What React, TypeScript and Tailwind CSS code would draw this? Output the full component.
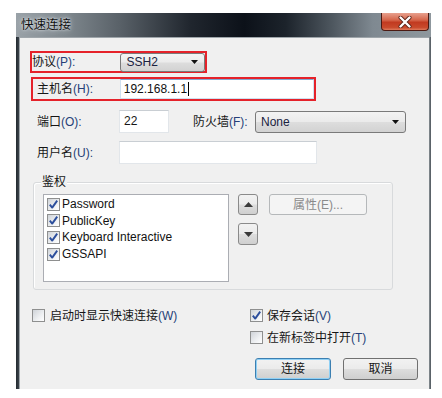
import React from 'react';

const font = "font-[family-name:'Liberation_Sans','Noto_Sans_CJK_SC',sans-serif]";

const Key: React.FC<{ k: string; tail?: string }> = ({ k, tail = '' }) => (
    <span className="text-[#263f78]">({k}){tail}</span>
);

const CheckBox: React.FC<{ checked?: boolean }> = ({ checked }) => (
    <div className="w-[13px] h-[13px] shrink-0 border border-[#8e8f8f] bg-[linear-gradient(135deg,#cfd3d8_0%,#eef0f2_60%,#ffffff_100%)] flex items-center justify-center">
        {checked && (
            <svg width="11" height="11" viewBox="0 0 11 11">
                <path d="M1.8 5.6 L4.2 8.6 L9.2 1.6" stroke="#2c4e9c" strokeWidth="1.9" fill="none" strokeLinejoin="round" />
            </svg>
        )}
    </div>
);

const Arrow: React.FC<{ up?: boolean }> = ({ up }) => (
    <svg width="9" height="5" viewBox="0 0 9 5">
        <path d={up ? 'M0 5 L4.5 0 L9 5 Z' : 'M0 0 L9 0 L4.5 5 Z'} fill="#3a3a3a" />
    </svg>
);

const Combo: React.FC<{ value: string; className: string }> = ({ value, className }) => (
    <div className={`${className} flex items-center justify-between pl-[5px] pr-[6px] border border-[#7a7a7a] rounded-[3px] bg-[linear-gradient(180deg,#f3f3f3_0%,#ebebeb_48%,#dddddd_52%,#d2d2d2_100%)] text-[12px] text-[#1a2240]`}>
        <span>{value}</span>
        <svg width="7" height="4" viewBox="0 0 7 4">
            <path d="M0 0 L7 0 L3.5 4 Z" fill="#111" />
        </svg>
    </div>
);

const winBtn =
    'flex items-center justify-center rounded-[3px] border bg-[linear-gradient(180deg,#f2f2f2_0%,#ebebeb_48%,#dddddd_52%,#cfcfcf_100%)] text-[12px]';

const App: React.FC = () => {
    return (
        <div className={`w-[442px] h-[398px] bg-white pt-[13px] pl-[16px] ${font}`}>
            <div className="w-[415px] h-[376px] flex flex-col">
                {/* title bar */}
                <div className="h-[24px] flex items-start bg-[linear-gradient(90deg,#9aa2a8_0%,#7f888e_12%,#596168_25%,#20262e_42%,#0c1119_55%,#1c232b_65%,#4d565e_76%,#7f8991_86%,#8e979d_100%)]">
                    <span className="pl-[5px] pt-[4px] text-[12.5px] leading-[16px] text-[#121212] [text-shadow:0_0_5px_#dfe5ea,0_0_2px_#e6ebee]">快速连接</span>
                    <div className="ml-auto mr-[2px] w-[48px] h-[18px] rounded-b-[4px] border border-t-0 border-[#4b1a12] bg-[linear-gradient(180deg,#e7a08e_0%,#d5654a_42%,#c13a20_55%,#c94a2c_85%,#de7a5c_100%)] flex items-center justify-center">
                        <svg width="14" height="12" viewBox="0 0 14 12">
                            <path d="M2.5 1.5 L11.5 10.5 M11.5 1.5 L2.5 10.5" stroke="#5a2218" strokeWidth="4" strokeLinecap="round" />
                            <path d="M2.5 1.5 L11.5 10.5 M11.5 1.5 L2.5 10.5" stroke="#ffffff" strokeWidth="2.4" strokeLinecap="round" />
                        </svg>
                    </div>
                </div>

                <div className="flex flex-1">
                    <div className="w-[3px] bg-[linear-gradient(90deg,#222a30,#3c444b)]" />
                    <div className="w-[410px] h-[352px] border-l border-t border-[#9ea5aa] bg-[#f0f0f0] text-[12px] text-[#161616]">
                        {/* protocol */}
                        <div className="ml-[10px] mt-[13px] w-[177px] h-[22px] border-2 border-[#e5222a] flex items-center">
                            <span className="w-[89px]">协议<Key k="P" tail=":" /></span>
                            <Combo value="SSH2" className="w-[85px] h-[19px]" />
                        </div>

                        {/* host */}
                        <div className="ml-[11px] mt-[4px] w-[285px] h-[24px] border-2 border-[#e5222a] flex items-center">
                            <span className="w-[87px] pl-[4px]">主机名<Key k="H" tail=":" /></span>
                            <div className="w-[195px] h-[20px] bg-white border border-[#cfe0f0] border-t-[#7fa9d3] flex items-center pl-[3px] text-[#111]">
                                <span>192.168.1.1</span>
                                <span className="ml-px w-px h-[14px] bg-black" />
                            </div>
                        </div>

                        {/* port / firewall */}
                        <div className="mt-[9px] h-[23px] flex items-center">
                            <span className="ml-[17px] w-[82px]">端口<Key k="O" tail=":" /></span>
                            <div className="w-[50px] h-[23px] bg-white border border-[#e2e6ea] border-t-[#c9ced3] flex items-center pl-[4px] pb-[2px]">22</div>
                            <span className="ml-[24px] w-[62px]">防火墙<Key k="F" tail=":" /></span>
                            <Combo value="None" className="w-[151px] h-[22px]" />
                        </div>

                        {/* username */}
                        <div className="mt-[8px] h-[23px] flex items-center">
                            <span className="ml-[17px] w-[82px]">用户名<Key k="U" tail=":" /></span>
                            <div className="w-[198px] h-[23px] bg-white border border-[#e2e6ea] border-t-[#c9ced3]" />
                        </div>

                        {/* auth group */}
                        <div className="relative ml-[13px] mt-[18px] w-[360px] h-[108px] border border-[#d8dadc] rounded-[3px] shadow-[inset_1px_1px_0_#ffffff] flex items-start pl-[9px] pt-[11px]">
                            <span className="absolute left-[7px] -top-[9px] px-[1px] bg-[#f0f0f0] leading-[16px]">鉴权</span>
                            <div className="w-[186px] h-[88px] bg-white border border-[#abadb3] pt-px pl-[3px]">
                                {['Password', 'PublicKey', 'Keyboard Interactive', 'GSSAPI'].map(t => (
                                    <div key={t} className="h-[16.6px] flex items-center gap-[2px] text-[#121212]">
                                        <CheckBox checked />
                                        <span>{t}</span>
                                    </div>
                                ))}
                            </div>
                            <div className="ml-[9px] flex flex-col gap-[8px]">
                                <div className={`${winBtn} w-[20px] h-[21px] border-[#8a8a8a]`}><Arrow up /></div>
                                <div className={`${winBtn} w-[20px] h-[22px] border-[#8a8a8a]`}><Arrow /></div>
                            </div>
                            <div className="ml-[11px] w-[98px] h-[21px] rounded-[3px] border border-[#b5b8ba] bg-[#f4f4f4] flex items-center justify-center text-[#8a8a8a]">
                                属性(E)...
                            </div>
                        </div>

                        {/* options */}
                        <div className="mt-[19px] flex">
                            <div className="w-[230px] pl-[12px] h-[13px] flex items-center gap-[5px]">
                                <CheckBox />
                                <span>启动时显示快速连接<Key k="W" /></span>
                            </div>
                            <div className="flex flex-col gap-[9px]">
                                <div className="h-[13px] flex items-center gap-[4px]">
                                    <CheckBox checked />
                                    <span>保存会话<Key k="V" /></span>
                                </div>
                                <div className="h-[13px] flex items-center gap-[4px]">
                                    <CheckBox />
                                    <span>在新标签中打开<Key k="T" /></span>
                                </div>
                            </div>
                        </div>

                        {/* buttons */}
                        <div className="mt-[14px] ml-[235px] flex gap-[12px]">
                            <div className={`${winBtn} w-[76px] h-[22px] border-[#3c7fb1] shadow-[inset_0_0_0_1px_#8fd0f5]`}>连接</div>
                            <div className={`${winBtn} w-[75px] h-[22px] border-[#707070]`}>取消</div>
                        </div>
                    </div>
                    <div className="w-[2px] bg-[linear-gradient(90deg,#8c9398,#4a5258)]" />
                </div>
            </div>
        </div>
    );
};

export default App;
